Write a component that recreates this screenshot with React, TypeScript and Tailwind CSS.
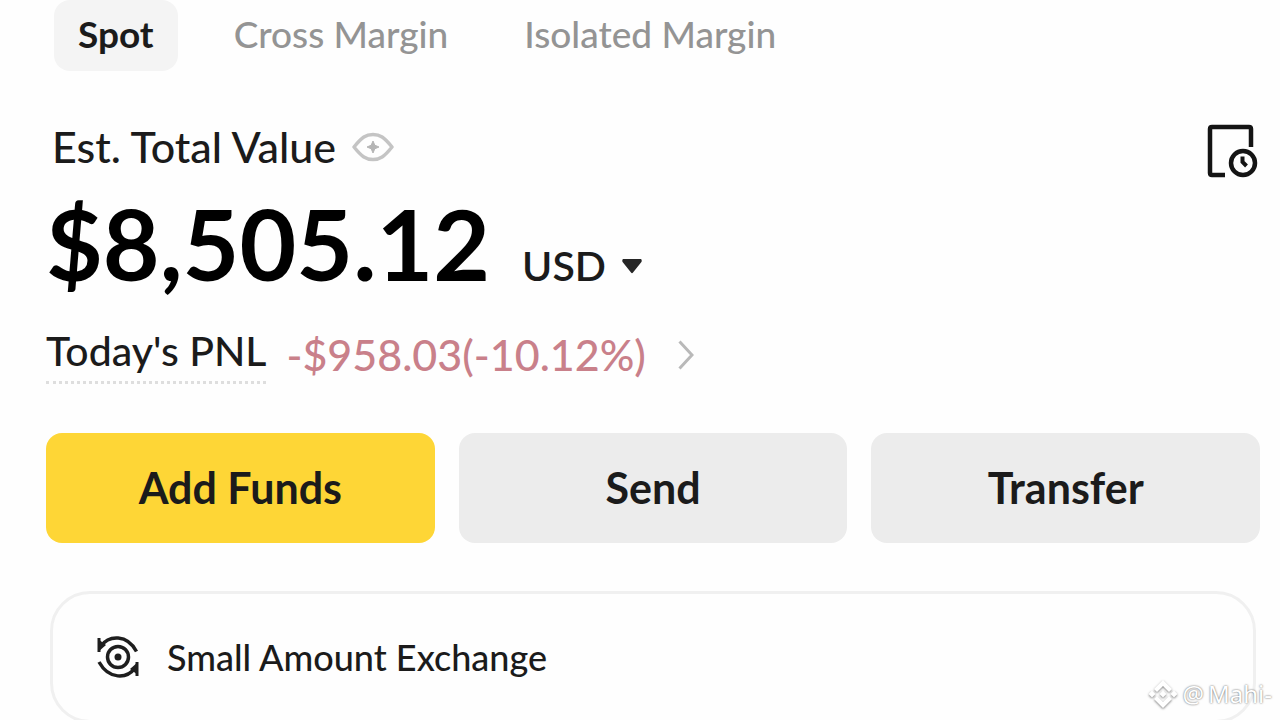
import { useState } from 'react'

const tabs = ['Spot', 'Cross Margin', 'Isolated Margin']

function EyeIcon() {
    return (
        <svg viewBox="0 0 42 30" className="w-[42px] h-[30px]" fill="none" stroke="#c4c4c4" strokeWidth="3.500">
            <path d="M2 15 C10 5 14 2.500 21 2.500 S32 5 40 15 C32 25 28 27.500 21 27.500 S10 25 2 15Z" strokeLinejoin="round" />
            <path d="M21 9 L22.800 13.200 L27 15 L22.800 16.800 L21 21 L19.200 16.800 L15 15 L19.200 13.200Z" fill="#b5b5b5" stroke="#b5b5b5" strokeWidth="1" />
        </svg>
    )
}

function HistoryIcon() {
    return (
        <svg viewBox="0 0 52 56" className="w-[52px] h-14" fill="none" stroke="#141414" strokeWidth="4.500">
            <path d="M19 52 H6 Q4 52 4 50 V6 Q4 4 6 4 H43 Q45 4 45 6 V24" />
            <circle cx="37" cy="40" r="12" />
            <path d="M36.500 33.500 V39 L40.500 43" strokeWidth="4" />
        </svg>
    )
}

function ExchangeIcon() {
    return (
        <svg viewBox="0 0 42 44" className="w-[42px] h-11" fill="none" stroke="#1e1e1e" strokeWidth="3.500">
            <circle cx="21" cy="22" r="10.500" />
            <circle cx="21" cy="22" r="3.500" fill="#1e1e1e" stroke="none" />
            <path d="M4 11 C12 0 30 -1 39.500 16.500" />
            <path d="M38 33 C30 44 12 45 2 27" />
            <path d="M1 4 V17 L9 10Z" fill="#1e1e1e" stroke="none" />
            <path d="M2 3 V17" strokeWidth="3" />
            <path d="M41 40 V27 L33 34Z" fill="#1e1e1e" stroke="none" />
            <path d="M40 27 V41" strokeWidth="3" />
        </svg>
    )
}

function DiamondLogo() {
    return (
        <svg viewBox="0 0 30 30" className="w-[30px] h-[30px] drop-shadow-[0_1px_1px_rgba(0,0,0,0.5)]" fill="#ffffff">
            <path d="M15 1 L24 10 L21 13 L15 7 L9 13 L6 10Z" />
            <path d="M15 29 L24 20 L21 17 L15 23 L9 17 L6 20Z" />
            <path d="M15 11.500 L18.500 15 L15 18.500 L11.500 15Z" />
            <path d="M4 11.500 L7.500 15 L4 18.500 L0.500 15Z" />
            <path d="M26 11.500 L29.500 15 L26 18.500 L22.500 15Z" />
        </svg>
    )
}

export default function App() {
    const [active, setActive] = useState('Spot')

    return (
        <main className="relative h-screen overflow-hidden bg-[#fefefe] pl-[46px] pr-5 font-['Lato',sans-serif] text-[#1b1b1b]">
            {/* Account tabs */}
            <nav className="flex items-center gap-2 pl-2">
                {tabs.map((tab) => (
                    <button
                        key={tab}
                        onClick={() => setActive(tab)}
                        className={`h-[71px] px-6 pb-1 rounded-2xl text-[37px] ${active === tab
                                ? 'mr-6 bg-[#f4f4f4] font-bold text-[#1b1b1b]'
                                : 'mr-5 font-medium text-[#949494]'
                            }`}
                    >
                        {tab}
                    </button>
                ))}
            </nav>

            {/* Balance */}
            <div className="mt-[50px] flex items-start justify-between">
                <div className="flex items-center gap-4 pl-1.5">
                    <h1 className="text-[43px] leading-[52px] font-medium">Est. Total Value</h1>
                    <button aria-label="Hide balance">
                        <EyeIcon />
                    </button>
                </div>
                <button aria-label="History" className="pt-0.5 pr-0.5">
                    <HistoryIcon />
                </button>
            </div>

            <div className="mt-3 flex items-baseline gap-8">
                <p className="text-[98px] leading-[104px] font-bold text-black">$8,505.12</p>
                <button className="flex items-center gap-4 text-[41px] leading-[50px] font-semibold">
                    USD
                    <svg viewBox="0 0 20 15" className="w-5 h-[15px]" fill="#262626">
                        <path d="M1 0 H19 Q20.500 1.500 19 3.500 L11 13.500 Q10 15 9 13.500 L1 3.500 Q-0.500 1.500 1 0Z" />
                    </svg>
                </button>
            </div>

            <div className="mt-[30px] flex items-center gap-5">
                <span className="border-b-[3px] border-dotted border-[#dedede] pb-1 text-[41px] leading-[52px] font-medium">
                    Today's PNL
                </span>
                <a href="#pnl" className="flex items-center gap-8 text-[43px] leading-[52px] font-medium text-[#c9808a]">
                    -$958.03(-10.12%)
                    <svg viewBox="0 0 16 30" className="w-4 h-[30px]" fill="none" stroke="#b9b9b9" strokeWidth="3">
                        <path d="M1.500 1.500 L14 15 L1.500 28.500" />
                    </svg>
                </a>
            </div>

            {/* Actions */}
            <div className="mt-[49px] grid grid-cols-3 gap-6 text-[43px] font-bold">
                <button className="h-[110px] rounded-2xl bg-[#fed636]">Add Funds</button>
                <button className="h-[110px] rounded-2xl bg-[#ececec]">Send</button>
                <button className="h-[110px] rounded-2xl bg-[#ececec]">Transfer</button>
            </div>

            <a
                href="#exchange"
                className="mt-12 mx-1 flex h-[132px] items-center gap-7 rounded-[40px] border-[3px] border-[#f0f0f0] px-11 text-[36px] font-medium"
            >
                <ExchangeIcon />
                Small Amount Exchange
            </a>

            {/* Author tag */}
            <div className="absolute right-2 bottom-2.5 flex items-center gap-1 font-['Noto_Sans',sans-serif] text-2xl text-white [text-shadow:0_0_2px_rgba(0,0,0,0.7)]">
                <DiamondLogo />
                <span>@</span>
                <span>Mahi-</span>
            </div>
        </main>
    )
}
